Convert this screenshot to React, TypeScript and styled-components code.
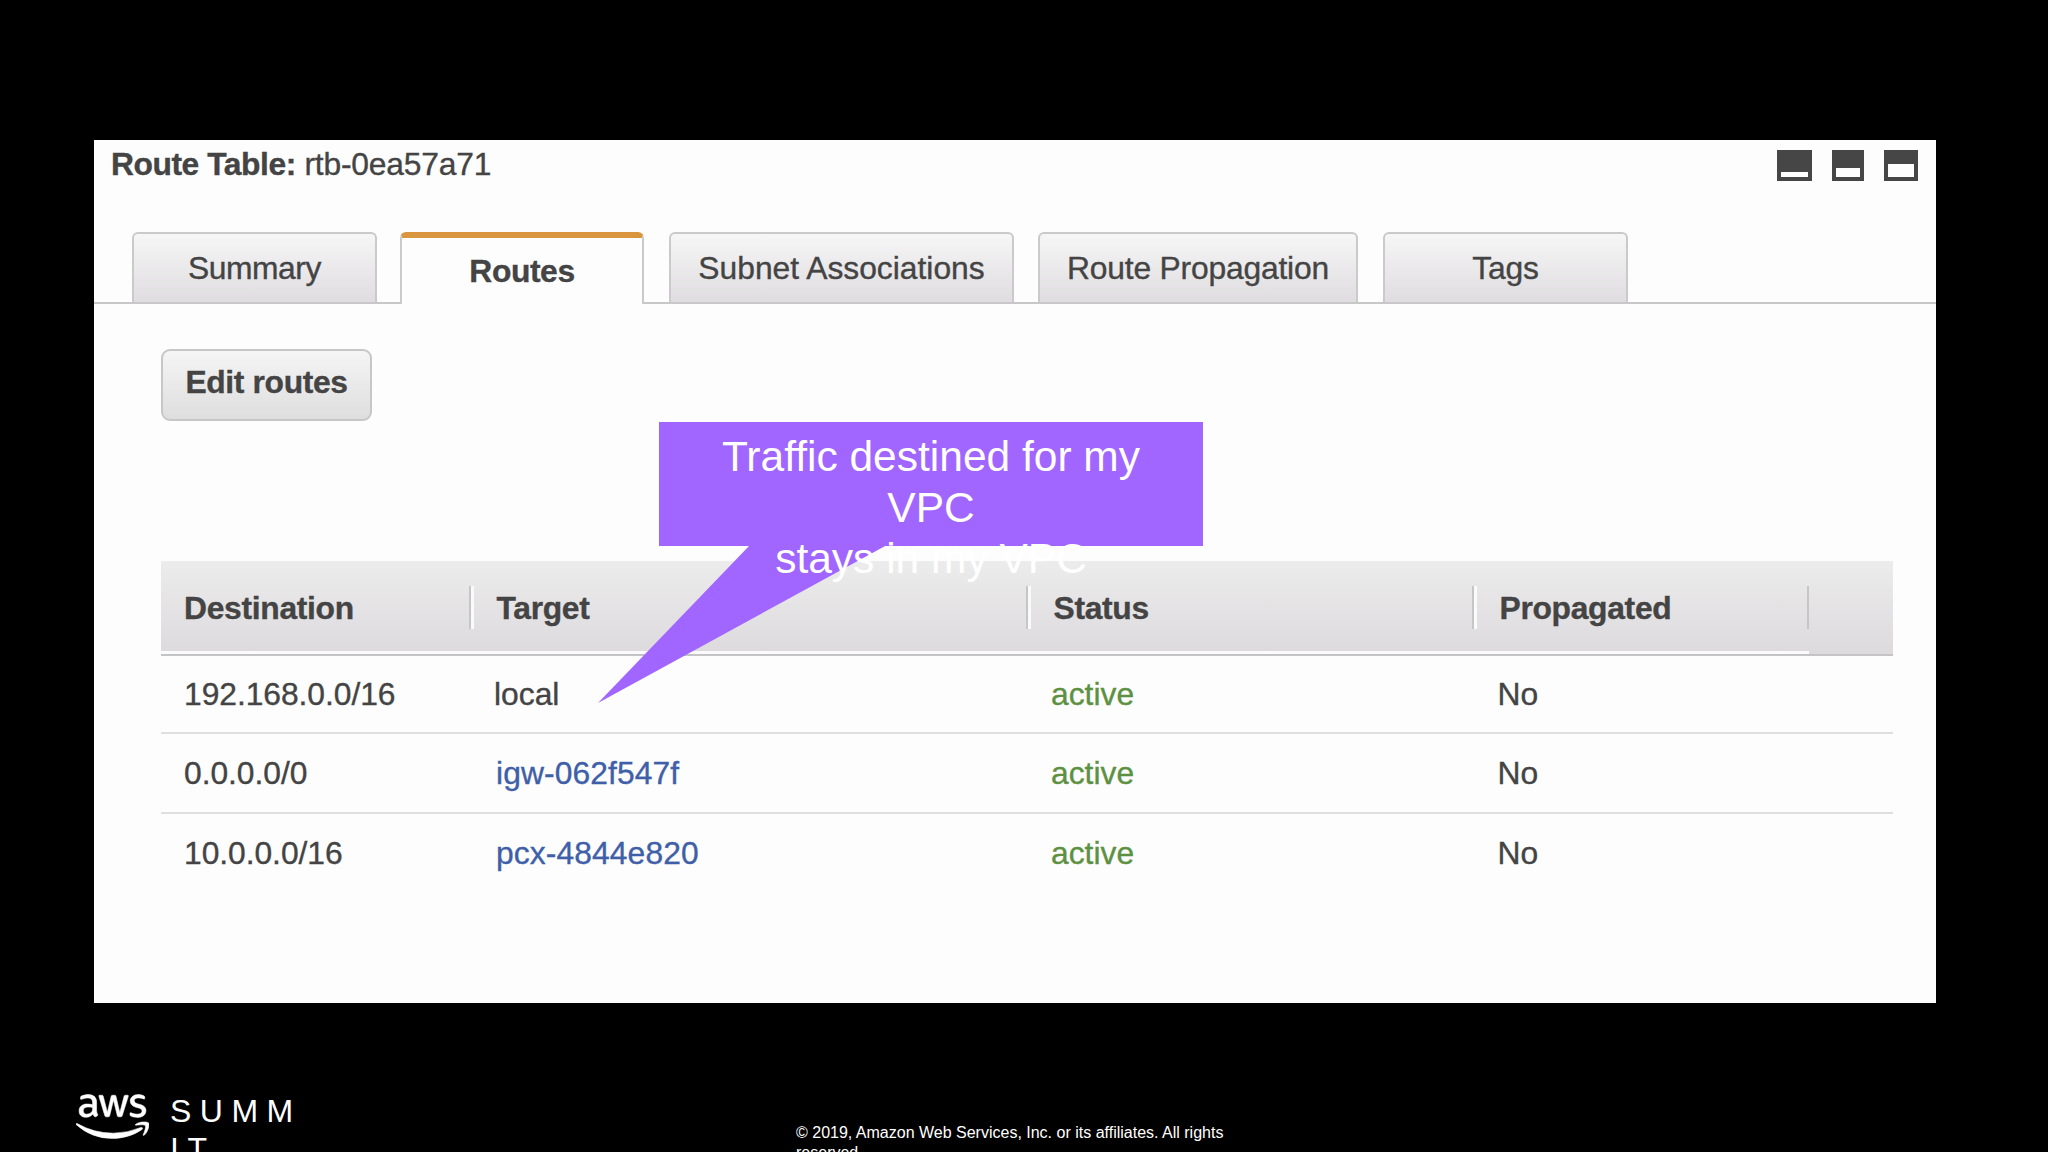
import React from "react";
import styled, { createGlobalStyle } from "styled-components";
import { FaAws } from "react-icons/fa";

const GlobalStyle = createGlobalStyle`
  *, *::before, *::after { box-sizing: border-box; }
  html, body { margin: 0; background: #000; overflow: hidden; }
  body { font-family: "Liberation Sans", Arial, sans-serif; }
`;

const Slide = styled.div`
  position: relative;
  display: flex;
  flex-direction: column;
  width: 2048px;
  height: 1152px;
  padding: 140px 112px 0 94px;
  overflow: hidden;
  background: #000;
`;

const Panel = styled.main`
  display: flex;
  flex-direction: column;
  flex: none;
  height: 863px;
  background: #fdfdfd;
  color: #444;
  font-size: 31.8px;
  line-height: 36px;
  white-space: nowrap;
  -webkit-text-stroke: 0.35px currentColor;
`;

const PanelHeader = styled.header`
  display: flex;
  justify-content: space-between;
  height: 92px;
  padding: 6px 18px 0 17px;
`;

const Title = styled.h1`
  margin: 0;
  font-size: inherit;
  font-weight: 400;
  letter-spacing: -0.2px;

  b {
    letter-spacing: -0.45px;
  }
`;

const PaneButtons = styled.div`
  display: flex;
  gap: 20px;
  padding-top: 4px;
`;

const PaneButton = styled.span<{ $width: number; $open: number }>`
  display: flex;
  align-items: flex-end;
  width: ${(p) => p.$width}px;
  height: 31px;
  padding: 4px;
  background: #464646;

  &::after {
    content: "";
    width: 100%;
    height: ${(p) => p.$open}px;
    background: #fdfdfd;
  }
`;

const TabBar = styled.nav`
  display: flex;
  flex: none;
  height: 72px;
  padding-left: 38px;
  box-shadow: inset 0 -2px 0 #c9c8c9;
`;

const Tab = styled.div<{ $width: number; $gap: number; $spacing: number; $active?: boolean }>`
  width: ${(p) => p.$width}px;
  height: ${(p) => (p.$active ? 72 : 70)}px;
  margin-right: ${(p) => p.$gap}px;
  padding-top: ${(p) => (p.$active ? 15 : 16)}px;
  border: 2px solid #cbcacb;
  border-bottom: 0;
  border-radius: 6px 6px 0 0;
  background: linear-gradient(#f7f6f7, #dfdddf);
  letter-spacing: ${(p) => p.$spacing}px;
  text-align: center;
  ${(p) =>
    p.$active &&
    `
    border-top: 6px solid #d9963f;
    background: #fdfdfd;
    font-weight: 700;
  `}
`;

const Content = styled.section`
  display: flex;
  flex-direction: column;
  align-items: flex-start;
  padding: 45px 43px 0 67px;
`;

const EditButton = styled.button`
  width: 211px;
  height: 72px;
  margin-bottom: 140px;
  padding: 0 0 6px;
  border: 2px solid #c8c7c8;
  border-radius: 9px;
  background: linear-gradient(#f6f5f6, #dfdedf);
  color: #444;
  font: 700 31.8px/36px "Liberation Sans", Arial, sans-serif;
  letter-spacing: -0.35px;
`;

const Table = styled.div`
  width: 1732px;
`;

const columns = "310px 557px 446px 335px 1fr";

const HeadRow = styled.div`
  display: grid;
  grid-template-columns: ${columns};
  height: 95px;
  border-bottom: 2px solid #c4c3c5;
  background: linear-gradient(#edecec, #dcdadd);
  font-weight: 700;
  letter-spacing: -0.3px;
`;

const HeadCell = styled.div<{ $inset: number; $last?: boolean }>`
  display: flex;
  justify-content: space-between;
  padding: 29px 0 0 ${(p) => p.$inset}px;
  border-bottom: 3px solid #fbfbfb;

  &::after {
    content: "";
    width: ${(p) => (p.$last ? 2 : 5)}px;
    height: 43px;
    margin: -4px ${(p) => (p.$last ? 0 : -3)}px 0 0;
    border-left: 2px solid #c6c5c8;
    border-right: ${(p) => (p.$last ? 0 : 3)}px solid #fafafa;
  }
`;

const BodyRow = styled.div`
  display: grid;
  grid-template-columns: ${columns};
  align-items: start;
  height: 76px;
  padding-top: 20px;

  & + & {
    height: 80px;
    border-top: 2px solid #dfdee1;
    padding-top: 21px;
  }
`;

const Cell = styled.span<{ $inset: number; $color?: string; $spacing?: number }>`
  padding-left: ${(p) => p.$inset}px;
  color: ${(p) => p.$color ?? "#444"};
  letter-spacing: ${(p) => p.$spacing ?? 0}px;
`;

const Callout = styled.aside`
  position: absolute;
  left: 659px;
  top: 422px;
  width: 544px;
  height: 124px;
  padding: 9px 60px 0;
  background: #a166ff;
  color: #fff;
  font-size: 42.5px;
  line-height: 51px;
  text-align: center;
`;

const CalloutTail = styled.svg`
  position: absolute;
  left: -61px;
  top: 124px;
  width: 290px;
  height: 158px;
`;

const CalloutText = styled.div`
  position: relative;
`;

const Footer = styled.footer`
  display: flex;
  align-items: flex-start;
  height: 149px;
  color: #fff;
`;

const Logo = styled(FaAws)`
  flex: none;
  width: 73px;
  height: 59px;
  margin: 84px 0 0 -18px;
  stroke: #fff;
  stroke-width: 5px;
`;

const EventName = styled.div`
  width: 150px;
  margin: 89px 0 0 21px;
  font-size: 32px;
  line-height: 38.4px;
  letter-spacing: 8.5px;
`;

const Copyright = styled.p`
  width: 450px;
  margin: 120px 0 0 476px;
  font-size: 16px;
  line-height: 20px;
`;

const tabs = [
  { label: "Summary", width: 245, gap: 23, spacing: -0.45 },
  { label: "Routes", width: 244, gap: 25, spacing: -0.4, active: true },
  { label: "Subnet Associations", width: 345, gap: 24, spacing: 0 },
  { label: "Route Propagation", width: 320, gap: 25, spacing: -0.2 },
  { label: "Tags", width: 245, gap: 0, spacing: -0.2 },
];

const routes = [
  { destination: "192.168.0.0/16", target: "local", link: false },
  { destination: "0.0.0.0/0", target: "igw-062f547f", link: true },
  { destination: "10.0.0.0/16", target: "pcx-4844e820", link: true },
];

export default function App() {
  return (
    <>
      <GlobalStyle />
      <Slide>
        <Panel>
          <PanelHeader>
            <Title>
              <b>Route Table:</b> rtb-0ea57a71
            </Title>
            <PaneButtons>
              <PaneButton $width={35} $open={5} />
              <PaneButton $width={32} $open={9} />
              <PaneButton $width={34} $open={13} />
            </PaneButtons>
          </PanelHeader>
          <TabBar>
            {tabs.map((t) => (
              <Tab key={t.label} $width={t.width} $gap={t.gap} $spacing={t.spacing} $active={t.active}>
                {t.label}
              </Tab>
            ))}
          </TabBar>
          <Content>
            <EditButton>Edit routes</EditButton>
            <Table>
              <HeadRow>
                <HeadCell $inset={23}>Destination</HeadCell>
                <HeadCell $inset={25.5}>Target</HeadCell>
                <HeadCell $inset={25.5}>Status</HeadCell>
                <HeadCell $inset={25.5} $last>
                  Propagated
                </HeadCell>
              </HeadRow>
              {routes.map((r) => (
                <BodyRow key={r.destination}>
                  <Cell $inset={23} $spacing={-0.05}>
                    {r.destination}
                  </Cell>
                  <Cell
                    $inset={r.link ? 25 : 23}
                    $color={r.link ? "#3f5fa8" : undefined}
                    $spacing={r.link ? 0.1 : 0}
                  >
                    {r.target}
                  </Cell>
                  <Cell $inset={23} $color="#5d9142">
                    active
                  </Cell>
                  <Cell $inset={23.5}>No</Cell>
                </BodyRow>
              ))}
            </Table>
          </Content>
        </Panel>
        <Footer>
          <Logo />
          <EventName>
            SUMM
            <br />
            IT
          </EventName>
          <Copyright>
            © 2019, Amazon Web Services, Inc. or its affiliates. All rights
            <br />
            reserved.
          </Copyright>
        </Footer>
        <Callout>
          <CalloutTail viewBox="0 0 290 158">
            <path d="M152-1 0 157 289-1Z" fill="#a166ff" />
          </CalloutTail>
          <CalloutText>
            Traffic destined for my VPC
            <br />
            stays in my VPC
          </CalloutText>
        </Callout>
      </Slide>
    </>
  );
}
